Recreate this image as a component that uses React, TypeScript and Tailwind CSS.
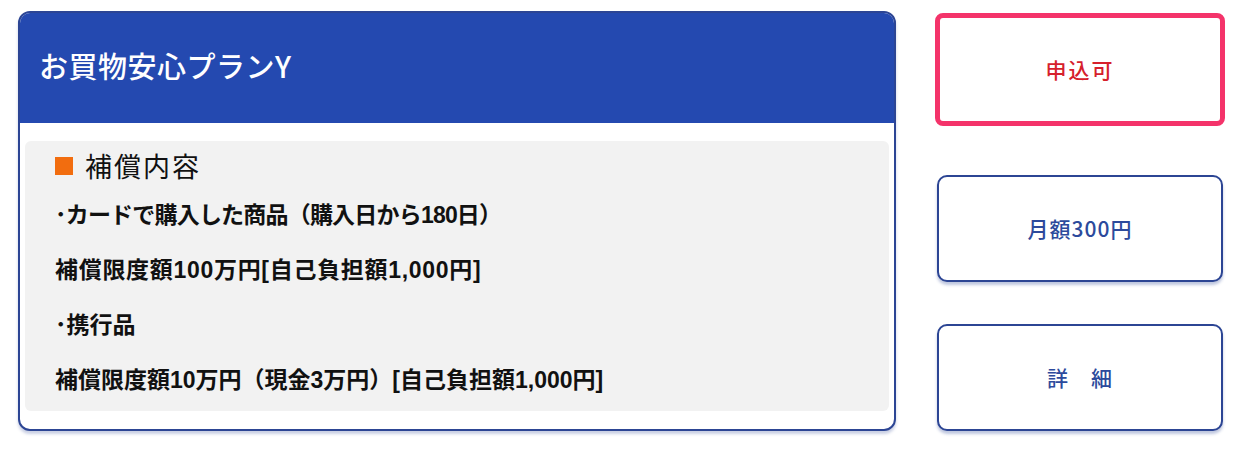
const font = '[font-family:"Noto_Sans_CJK_JP","Noto_Sans",sans-serif]';
const bodyFont = '[font-family:"Liberation_Sans","Noto_Sans_CJK_JP",sans-serif]';

// tracking per line, tuned to the original widths
const lines = [
  { text: '･カードで購入した商品（購入日から180日）', cls: 'tracking-[-0.8px]' },
  { text: '補償限度額100万円[自己負担額1,000円]', cls: 'tracking-[0.7px]' },
  { text: '･携行品', cls: 'tracking-[0px]' },
  { text: '補償限度額10万円（現金3万円）[自己負担額1,000円]', cls: 'tracking-[0px]' },
];

export default function App() {
  return (
    <div className={'flex h-[466px] w-[1250px] bg-white pl-[18px] pt-[11px] ' + font}>
      {/* Plan card */}
      <div className="flex h-[420px] w-[878px] flex-col overflow-hidden rounded-[12px] border-2 border-[#2c4594] bg-white shadow-[0_3px_3px_rgba(44,69,148,0.25)]">
        <div className="flex h-[110px] items-center bg-[#2449b0] pl-[19px] pb-[4px]">
          <h2 className="text-[29px] font-medium tracking-[0.5px] text-white">お買物安心プランY</h2>
        </div>
        <div className="mx-[5px] mt-[18px] h-[270px] rounded-[6px] bg-[#f2f2f2] pl-[30px] pt-[5px]">
          <div className="flex items-center gap-[12px]">
            <span className="h-[18px] w-[18px] bg-[#f26d0f]" />
            <span className="text-[27px] tracking-[2px] text-[#111]">補償内容</span>
          </div>
          <div className={'mt-[14px] flex flex-col gap-[26px] ' + bodyFont}>
            {lines.map((l, i) => (
              <p key={i} className={'text-[23px] font-bold leading-[29px] text-[#111] ' + l.cls}>{l.text}</p>
            ))}
          </div>
        </div>
      </div>

      {/* Side buttons */}
      <div className="ml-[39px] flex w-[290px] flex-col">
        <button className="mt-[2px] flex h-[113px] w-[290px] items-center justify-center rounded-[8px] border-[5px] border-[#f4336a] bg-white text-[21px] font-medium tracking-[2px] text-[#d6202c]">
          申込可
        </button>
        <button className="ml-[2px] mt-[49px] flex h-[107px] w-[286px] items-center justify-center rounded-[10px] border-2 border-[#2c4594] bg-white text-[21px] font-medium tracking-[1px] text-[#2c4a9c] shadow-[0_3px_3px_rgba(44,69,148,0.3)]">
          月額300円
        </button>
        <button className="ml-[2px] mt-[42px] flex h-[107px] w-[286px] items-center justify-center rounded-[10px] border-2 border-[#2c4594] bg-white text-[21px] font-medium tracking-[1px] text-[#2c4a9c] shadow-[0_3px_3px_rgba(44,69,148,0.3)]">
          詳　細
        </button>
      </div>
    </div>
  );
}
